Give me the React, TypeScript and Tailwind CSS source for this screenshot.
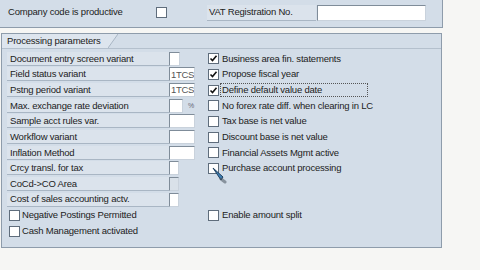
import React from "react";

const font = { fontFamily: '"Liberation Sans", Arial, sans-serif' };
const txt = "text-[9.5px] tracking-[-0.2px] text-[#222]";

function Check({ checked = false }: { checked?: boolean }) {
  return (
    <span className="inline-flex h-[11px] w-[11px] shrink-0 items-center justify-center border border-[#5f6d7c] bg-white">
      {checked && (
        <svg width="9" height="9" viewBox="0 0 9 9">
          <path d="M1.5 4.5 L3.5 6.5 L7.5 1.8" fill="none" stroke="#111" strokeWidth="1.6" />
        </svg>
      )}
    </span>
  );
}

function Label({ text }: { text: string }) {
  return (
    <div className={`flex h-[14px] w-[162px] items-center border-b border-[#a9b6c4] bg-[#dbe3ec] pl-[3px] leading-none ${txt}`}>
      {text}
    </div>
  );
}

function Input({ w, value = "", gray = false }: { w: string; value?: string; gray?: boolean }) {
  return (
    <div
      className={`flex h-[14px] items-center overflow-hidden border border-t-[#7f8c99] border-l-[#7f8c99] border-r-[#c9d2dc] border-b-[#c9d2dc] pl-[1px] text-[9.5px] tracking-[-0.3px] leading-none text-[#555] ${w} ${
        gray ? "bg-[#d9e1e9]" : "bg-white"
      }`}
    >
      {value}
    </div>
  );
}

const leftRows: { label: string; w: string; value?: string; pct?: boolean; gray?: boolean }[] = [
  { label: "Document entry screen variant", w: "w-[11px]" },
  { label: "Field status variant", w: "w-[26px]", value: "1TCS" },
  { label: "Pstng period variant", w: "w-[26px]", value: "1TCS" },
  { label: "Max. exchange rate deviation", w: "w-[14px]", pct: true },
  { label: "Sample acct rules var.", w: "w-[26px]" },
  { label: "Workflow variant", w: "w-[26px]" },
  { label: "Inflation Method", w: "w-[26px]" },
  { label: "Crcy transl. for tax", w: "w-[10px]" },
  { label: "CoCd->CO Area", w: "w-[10px]", gray: true },
  { label: "Cost of sales accounting actv.", w: "w-[10px]" },
];

const rightRows: { label: string; checked: boolean; focus?: boolean }[] = [
  { label: "Business area fin. statements", checked: true },
  { label: "Propose fiscal year", checked: true },
  { label: "Define default value date", checked: true, focus: true },
  { label: "No forex rate diff. when clearing in LC", checked: false },
  { label: "Tax base is net value", checked: false },
  { label: "Discount base is net value", checked: false },
  { label: "Financial Assets Mgmt active", checked: false },
  { label: "Purchase account processing", checked: false },
];

export default function App() {
  return (
    <div className="relative h-[270px] w-[480px] overflow-hidden bg-[#f6f6f4]" style={font}>
      {/* top panel */}
      <div className="flex h-[28px] w-[443px] items-center border-r border-b border-[#8e9cab] bg-[#d3dde8] pb-[2px]">
        <span className={`ml-[8px] w-[148px] ${txt}`}>Company code is productive</span>
        <Check />
        <div className={`ml-[40px] flex h-[16px] w-[109px] items-center border-b border-[#a9b6c4] bg-[#dbe3ec] pl-[2px] ${txt}`}>
          VAT Registration No.
        </div>
        <div className="ml-[1px] h-[16px] w-[109px] border border-t-[#7f8c99] border-l-[#7f8c99] border-r-[#c9d2dc] border-b-[#c9d2dc] bg-white" />
      </div>

      {/* processing parameters */}
      <div className="ml-[1px] mt-[5px] h-[215px] w-[441px] border border-[#8e9cab] bg-[#d3dde8]">
        <div className="flex h-[14px]">
          <div className={`flex w-[106px] items-center bg-[#dde5ee] pl-[5px] ${txt}`}>
            Processing parameters
          </div>
          <svg width="10" height="14" viewBox="0 0 10 14">
            <polygon points="0,0 10,0 0,14" fill="#dde5ee" />
            <line x1="10" y1="0" x2="0" y2="14" stroke="#a9b6c4" strokeWidth="1" />
          </svg>
        </div>
        <div className="flex border-t border-[#b4c0cd] pt-[2px]">
          <div className="ml-[5px] flex w-[200px] flex-col">
            {leftRows.map((r) => (
              <div key={r.label} className="flex h-[15.67px] items-center">
                <Label text={r.label} />
                <Input w={r.w} value={r.value} gray={r.gray} />
                {r.pct && <span className="ml-[5px] text-[7px] text-[#667]">%</span>}
              </div>
            ))}
            {["Negative Postings Permitted", "Cash Management activated"].map((t) => (
              <div key={t} className="flex h-[15.67px] items-center pl-[2px]">
                <Check />
                <span className={`ml-[2px] ${txt}`}>{t}</span>
              </div>
            ))}
          </div>
          <div className="ml-[1px] flex flex-col">
            {rightRows.map((r) => (
              <div key={r.label} className="flex h-[15.67px] items-center">
                <Check checked={r.checked} />
                <span
                  className={`ml-[1px] flex h-[14px] items-center pl-[1px] ${txt} ${
                    r.focus ? "w-[148px] border border-dotted border-[#555]" : "border border-transparent"
                  }`}
                >
                  {r.label}
                </span>
              </div>
            ))}
            <div className="h-[31.34px]" />
            <div className="flex h-[15.67px] items-center">
              <Check />
              <span className={`ml-[2px] pl-[1px] ${txt}`}>Enable amount split</span>
            </div>
          </div>
        </div>
      </div>

      {/* mouse cursor */}
      <svg className="absolute left-[210px] top-[164px]" width="18" height="20" viewBox="0 0 18 20">
        <path d="M3 4 L13 13 L11 16 Z" fill="#3d7fb5" stroke="#1d3f5e" strokeWidth="1" />
        <path d="M11 15 L15 18" stroke="#4a5560" strokeWidth="3" strokeLinecap="round" opacity="0.55" />
      </svg>
    </div>
  );
}
